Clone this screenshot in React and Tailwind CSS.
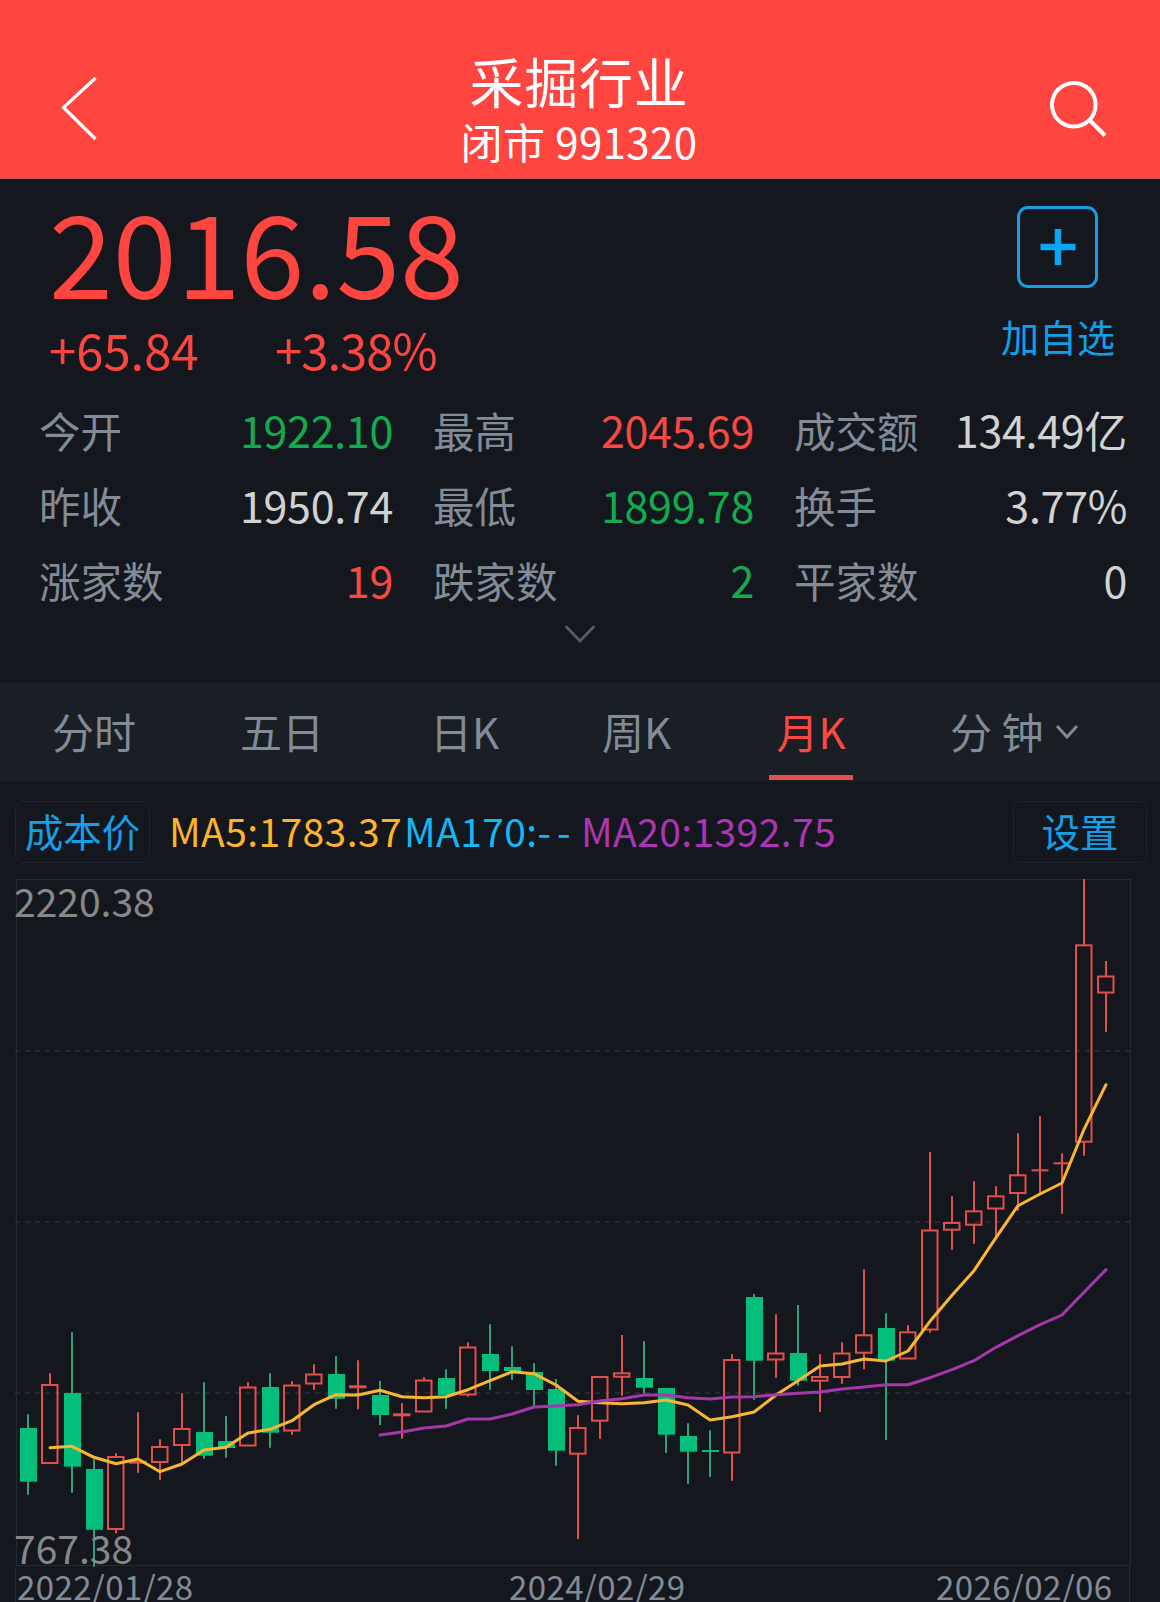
const STATS = [
  [
    { label: '今开', value: '1922.10', color: 'text-[#12ab50]' },
    { label: '昨收', value: '1950.74', color: 'text-[#d2d2d2]' },
    { label: '涨家数', value: '19', color: 'text-[#fa4843]' },
  ],
  [
    { label: '最高', value: '2045.69', color: 'text-[#fa4843]' },
    { label: '最低', value: '1899.78', color: 'text-[#12ab50]' },
    { label: '跌家数', value: '2', color: 'text-[#12ab50]' },
  ],
  [
    { label: '成交额', value: '134.49亿', color: 'text-[#d2d2d2]' },
    { label: '换手', value: '3.77%', color: 'text-[#d2d2d2]' },
    { label: '平家数', value: '0', color: 'text-[#d2d2d2]' },
  ],
];

// [direction, high, body top, body bottom, low]
const CANDLES = [
  ['down', 1414.3, 1428, 1481.7, 1494.7],
  ['up', 1373.3, 1385, 1463, 1463],
  ['down', 1332.3, 1393, 1466.7, 1492.7],
  ['down', 1459.3, 1469, 1529.7, 1566.7],
  ['up', 1453.3, 1457, 1529, 1533.3],
  ['up', 1412.3, 1461.7, 1462.7, 1472.7],
  ['up', 1439.3, 1447, 1462, 1480],
  ['up', 1393.3, 1429, 1445, 1463.3],
  ['down', 1382.3, 1432, 1455.7, 1458.7],
  ['down', 1416, 1441, 1448, 1457.7],
  ['up', 1382.3, 1387.5, 1445.5, 1445.5],
  ['down', 1373.3, 1387, 1432.7, 1447.7],
  ['up', 1381.3, 1385.5, 1430.5, 1434.7],
  ['up', 1364.3, 1374.5, 1383.5, 1389.7],
  ['down', 1356.3, 1374, 1398.7, 1408.7],
  ['up', 1360.3, 1386.3, 1387.3, 1409.3],
  ['down', 1381, 1395, 1415, 1425],
  ['up', 1403.3, 1414.3, 1415.3, 1438.7],
  ['up', 1377.3, 1380.5, 1411.5, 1411.5],
  ['down', 1369.3, 1378, 1395, 1408.7],
  ['up', 1342.3, 1347.5, 1394.5, 1396.7],
  ['down', 1324.3, 1354, 1371, 1389.7],
  ['down', 1346.3, 1367, 1371, 1379.7],
  ['down', 1363.3, 1372, 1390, 1406],
  ['down', 1379, 1389, 1450.7, 1465.7],
  ['up', 1415.3, 1428, 1453.7, 1539],
  ['up', 1377, 1377, 1420.7, 1438.7],
  ['up', 1335, 1373.3, 1376.7, 1395.7],
  ['down', 1341.3, 1378, 1387.7, 1393.3],
  ['down', 1388, 1388, 1434.7, 1452.7],
  ['down', 1423.3, 1436, 1451.7, 1483.7],
  ['down', 1430.3, 1450, 1452, 1477],
  ['up', 1354.3, 1360, 1452.5, 1480.7],
  ['down', 1294, 1297, 1360.7, 1399.7],
  ['up', 1314.3, 1353.5, 1359.5, 1377.7],
  ['down', 1305, 1353, 1380.7, 1385.7],
  ['up', 1354.3, 1377, 1380.7, 1412],
  ['up', 1342.3, 1353.5, 1377, 1383.7],
  ['up', 1269.3, 1335.3, 1352.7, 1369.3],
  ['down', 1313.3, 1328, 1360.7, 1440],
  ['up', 1325.3, 1332.3, 1358.5, 1358.5],
  ['up', 1152, 1230.5, 1329.5, 1332.7],
  ['up', 1196.3, 1223, 1229.7, 1249.7],
  ['up', 1181.3, 1211.3, 1224.7, 1243.7],
  ['up', 1186.3, 1196.3, 1208.5, 1238],
  ['up', 1133.3, 1175.3, 1193, 1210.7],
  ['up', 1116.3, 1170.3, 1170.3, 1194.3],
  ['up', 1153.3, 1163.3, 1163.3, 1213.7],
  ['up', 879, 945.3, 1141.7, 1155.7],
  ['up', 961, 976.5, 992.5, 1032],
];

// first point sits on candle 1
const MA5 = [
  1447.7, 1446.3, 1457.3, 1463.7, 1459, 1471.7, 1464, 1450, 1447.3, 1433, 1429.3, 1420.7,
  1404.7, 1394.7, 1395, 1390.3, 1396.7, 1397.7, 1396.7, 1389.7, 1380.7, 1371.7, 1373.7, 1385,
  1401.3, 1402.7, 1403.7, 1402.7, 1400, 1405, 1420, 1416.7, 1412, 1395, 1380.7, 1366, 1364,
  1359, 1361, 1351, 1321.3, 1295.3, 1270.7, 1237.7, 1205.7, 1194, 1183, 1129.3, 1084.7,
];

// first point sits on candle 16
const MA20 = [
  1435, 1432, 1428, 1426, 1419, 1419, 1414, 1407, 1406, 1404.7, 1401, 1398.7, 1395, 1395,
  1397.7, 1399, 1397, 1396.7, 1394.7, 1393.3, 1392, 1389, 1387, 1384.7, 1384.7, 1377.7,
  1369.7, 1360.7, 1347.3, 1335.7, 1324.7, 1315, 1292.3, 1269.7,
];

const candleX = (i) => 28 + 22 * i;
const toPoints = (values, start) => values.map((y, i) => `${candleX(i + start)},${y}`).join(' ');

function Candle({ index, data }) {
  const [dir, high, top, bottom, low] = data;
  const x = candleX(index);

  if (dir === 'down') {
    return (
      <g>
        <line x1={x} x2={x} y1={high} y2={low} stroke="#2ba377" strokeWidth="2" />
        <rect x={x - 8} y={top} width="17" height={bottom - top} fill="#03bf7b" />
      </g>
    );
  }

  return (
    <g stroke="#e14f4b" strokeWidth="2" fill="none">
      <line x1={x} x2={x} y1={high} y2={top} />
      <line x1={x} x2={x} y1={bottom} y2={low} />
      {bottom - top < 1
        ? <line x1={x - 8.5} x2={x + 8.5} y1={top} y2={top} />
        : <rect x={x - 8} y={top} width="15.5" height={bottom - top} />}
    </g>
  );
}

function Header() {
  return (
    <header className="flex h-[179px] items-start justify-between border-b border-[#b8605f] bg-[#ff4540] text-white">
      <svg className="ml-[56px] mt-[72px] h-[72px] w-[48px]" viewBox="0 0 48 72" fill="none" stroke="#fff" strokeWidth="3.2">
        <path d="M39.5 6 L7.5 35.5 L39.5 67" />
      </svg>
      <div className="ml-[8px] mt-[51px] flex flex-col items-center">
        <h1 className="text-[54px] font-normal leading-[60px] tracking-[0.7px]">采掘行业</h1>
        <p className="text-[42px] leading-[60px] tracking-[0.4px]">闭市 991320</p>
      </div>
      <svg className="mr-[48px] mt-[74px] h-[66px] w-[66px]" viewBox="1046 74 66 66" fill="none" stroke="#fff" strokeWidth="4">
        <circle cx="1073.8" cy="104.7" r="21.8" />
        <path d="M1089 119.5 L1105 135.5" />
      </svg>
    </header>
  );
}

function Quote() {
  return (
    <section className="flex h-[215px] justify-between">
      <div className="pl-[49px] text-[#ff4540]">
        <div className="mt-[13px] h-[115px] text-[115px] leading-[115px]">2016.58</div>
        <div className="mt-[12px] flex text-[49px] leading-[60px]">
          <span className="w-[226px]">+65.84</span>
          <span className="tracking-[-1px]">+3.38%</span>
        </div>
      </div>
      <div className="mr-[45px] mt-[27px] flex flex-col items-center text-[#129fe9]">
        <div className="flex h-[82px] w-[81px] items-center justify-center rounded-[11px] border-3 border-[#1b9ce0]">
          <svg className="h-[36px] w-[36px]" viewBox="0 0 36 36" stroke="#0aa5f5" strokeWidth="6.5">
            <path d="M18 0 V36 M0.5 18 H35.5" />
          </svg>
        </div>
        <span className="mt-[23px] text-[38px] leading-[50px]">加自选</span>
      </div>
    </section>
  );
}

function Stats() {
  return (
    <section className="h-[289px]">
      <div className="-mt-px flex gap-[40px] pl-[39px]">
        {STATS.map((column, i) => (
          <div key={i} className={i === 0 ? 'w-[354px]' : i === 1 ? 'w-[321px]' : 'w-[333px]'}>
            {column.map((item) => (
              <div key={item.label} className="flex h-[75px] items-start justify-between whitespace-nowrap">
                <span className="text-[41.5px] leading-[75px] text-[#828b96]">{item.label}</span>
                <span className={`text-[43px] leading-[73px] tracking-[-0.3px] ${item.color}`}>{item.value}</span>
              </div>
            ))}
          </div>
        ))}
      </div>
      <svg className="mx-auto mt-[5px] h-[24px] w-[36px]" viewBox="0 0 36 24" fill="none" stroke="#555d66" strokeWidth="2.8" strokeLinecap="round">
        <path d="M4.5 4 L18 18 L31.5 4" />
      </svg>
    </section>
  );
}

function Tabs() {
  return (
    <nav className="flex h-[98px] bg-[#1a1e25] pl-[52px] text-[42px] leading-[95px] text-[#828b96]">
      <span className="w-[188px]">分时</span>
      <span className="w-[190px]">五日</span>
      <span className="w-[172px]">日K</span>
      <span className="w-[167px]">周K</span>
      <div className="flex w-[84px] flex-col items-center text-[#fa4843]">
        <span className="h-[92px]">月K</span>
        <span className="h-[5px] w-full bg-[#e8504d]" />
      </div>
      <div className="ml-[97px] flex items-start">
        <span>分 钟</span>
        <svg className="ml-[11px] mt-[39px] h-[20px] w-[26px]" viewBox="0 0 26 20" fill="none" stroke="#858789" strokeWidth="3">
          <path d="M3 4 L13 15 L23 4" />
        </svg>
      </div>
    </nav>
  );
}

function Indicators() {
  return (
    <div className="flex h-[98px] items-start pl-[15px] pt-[20px] text-[39px] leading-[58px]">
      <button className="flex h-[62px] w-[135px] justify-center rounded-lg border border-[#20252b] text-[38.5px] leading-[57px] text-[#149fe8]">成本价</button>
      <div className="ml-[19px] flex whitespace-nowrap">
        <span className="w-[235px] tracking-[0.4px] text-[#fdb42c]">MA5:1783.37</span>
        <span className="w-[177px] tracking-[0.4px] text-[#12b7f5]">MA170:<span className="tracking-[6px]">--</span></span>
        <span className="tracking-[0.4px] text-[#ad35b3]">MA20:1392.75</span>
      </div>
      <button className="ml-auto mr-[13px] flex h-[62px] w-[134px] justify-center rounded-lg border border-[#20252b] text-[38.5px] leading-[57px] text-[#149fe8]">设置</button>
    </div>
  );
}

function Chart() {
  return (
    <section className="relative">
      <svg className="block h-[688px] w-[1160px]" viewBox="0 879 1160 688">
        <rect x="16.5" y="879.5" width="1114" height="686" fill="none" stroke="#252b32" />
        {[1051, 1222, 1393].map((y) => (
          <line key={y} x1="15" x2="1130" y1={y} y2={y} stroke="#252a31" strokeWidth="2" strokeDasharray="5 5" />
        ))}
        {CANDLES.map((c, i) => <Candle key={i} index={i} data={c} />)}
        <g fill="none" strokeWidth="3" strokeLinecap="round" strokeLinejoin="round">
          <polyline points={toPoints(MA5, 1)} stroke="#f8b733" />
          <polyline points={toPoints(MA20, 16)} stroke="#a637aa" />
        </g>
      </svg>
      <span className="absolute left-[14px] top-0 text-[39px] leading-[42px] text-[#888888]">2220.38</span>
      <span className="absolute bottom-[-1px] left-[14px] text-[39px] leading-[42px] text-[#888888]">767.38</span>
    </section>
  );
}

export default function App() {
  return (
    <div className="flex h-[1602px] w-[1160px] flex-col overflow-hidden bg-[#14181e] font-['Noto_Sans_CJK_SC',sans-serif]">
      <Header />
      <Quote />
      <Stats />
      <Tabs />
      <Indicators />
      <Chart />
      <div className="ml-[15px] flex h-[35px] w-[1115px] border-x border-[#252b32] pl-px text-[33px] leading-[39px] tracking-[0.4px] text-[#828b96]">
        <span className="w-[492px]">2022/01/28</span>
        <span className="w-[427px]">2024/02/29</span>
        <span>2026/02/06</span>
      </div>
    </div>
  );
}
